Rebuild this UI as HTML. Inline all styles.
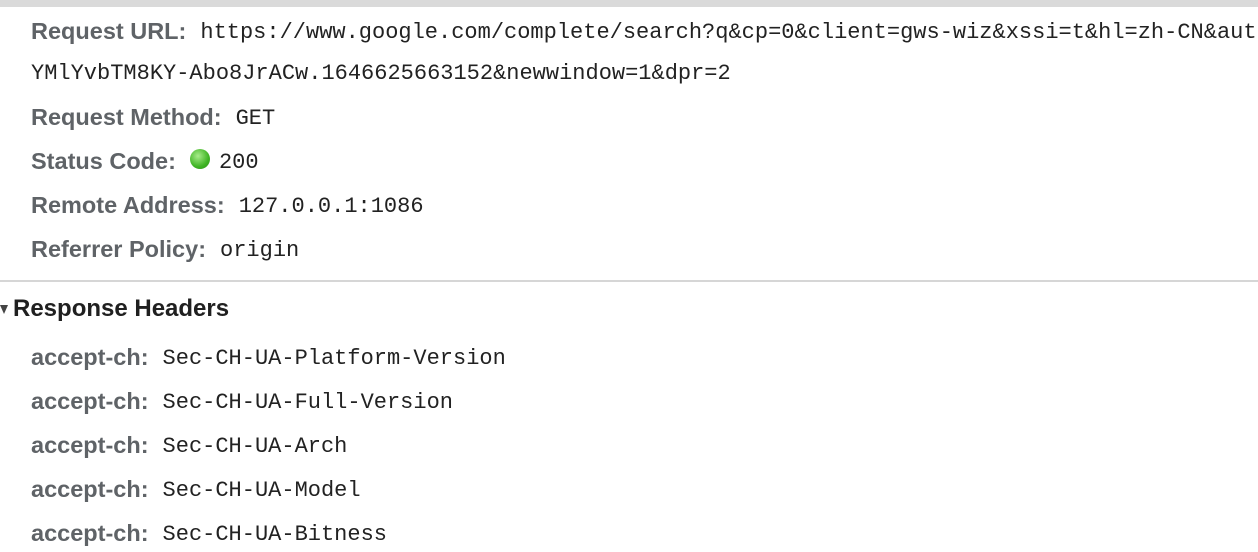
<!DOCTYPE html>
<html><head><meta charset="utf-8"><style>
body{margin:0;width:1258px;height:546px;background:#fff;overflow:hidden;position:relative;font-family:"Liberation Sans",sans-serif}
.top{position:absolute;left:0;top:0;width:1258px;height:7px;background:#dadada}
.row{position:absolute;left:31px;white-space:nowrap;height:30px;line-height:30px}
.k{font-weight:bold;color:#5f6367;font-size:23.5px;margin-right:14px}
.v{font-family:"Liberation Mono",monospace;font-size:22px;color:#222;position:relative;top:-1px}
.sep{position:absolute;left:0;top:280px;width:1258px;height:2px;background:#d6d6d6}
.hdr{position:absolute;left:13px;top:294px;font-weight:bold;font-size:24px;color:#202020;line-height:30px}
.tri{position:absolute;left:0;top:305px;width:0;height:0;border-left:4px solid transparent;border-right:4px solid transparent;border-top:9px solid #444}
.dot{display:inline-block;width:20px;height:20px;border-radius:50%;background:radial-gradient(circle at 40% 35%,#a8ec8a,#3fb424 60%,#2b8f17);vertical-align:0px;margin-right:9px}
</style></head><body>
<div class="top"></div>
<div class="row" style="top:16px"><span class="k">Request URL:</span><span class="v">https://www.google.com/complete/search?q&amp;cp=0&amp;client=gws-wiz&amp;xssi=t&amp;hl=zh-CN&amp;aut</span></div>
<div class="row" style="top:60px;left:31px"><span class="v">YMlYvbTM8KY-Abo8JrACw.1646625663152&amp;newwindow=1&amp;dpr=2</span></div>
<div class="row" style="top:102px"><span class="k">Request Method:</span><span class="v">GET</span></div>
<div class="row" style="top:146px"><span class="k">Status Code:</span><span class="dot"></span><span class="v">200</span></div>
<div class="row" style="top:190px"><span class="k">Remote Address:</span><span class="v">127.0.0.1:1086</span></div>
<div class="row" style="top:234px"><span class="k">Referrer Policy:</span><span class="v">origin</span></div>
<div class="sep"></div>
<div class="tri"></div>
<div class="hdr">Response Headers</div>
<div class="row" style="top:342px"><span class="k">accept-ch:</span><span class="v">Sec-CH-UA-Platform-Version</span></div>
<div class="row" style="top:386px"><span class="k">accept-ch:</span><span class="v">Sec-CH-UA-Full-Version</span></div>
<div class="row" style="top:430px"><span class="k">accept-ch:</span><span class="v">Sec-CH-UA-Arch</span></div>
<div class="row" style="top:474px"><span class="k">accept-ch:</span><span class="v">Sec-CH-UA-Model</span></div>
<div class="row" style="top:518px"><span class="k">accept-ch:</span><span class="v">Sec-CH-UA-Bitness</span></div>
</body></html>
